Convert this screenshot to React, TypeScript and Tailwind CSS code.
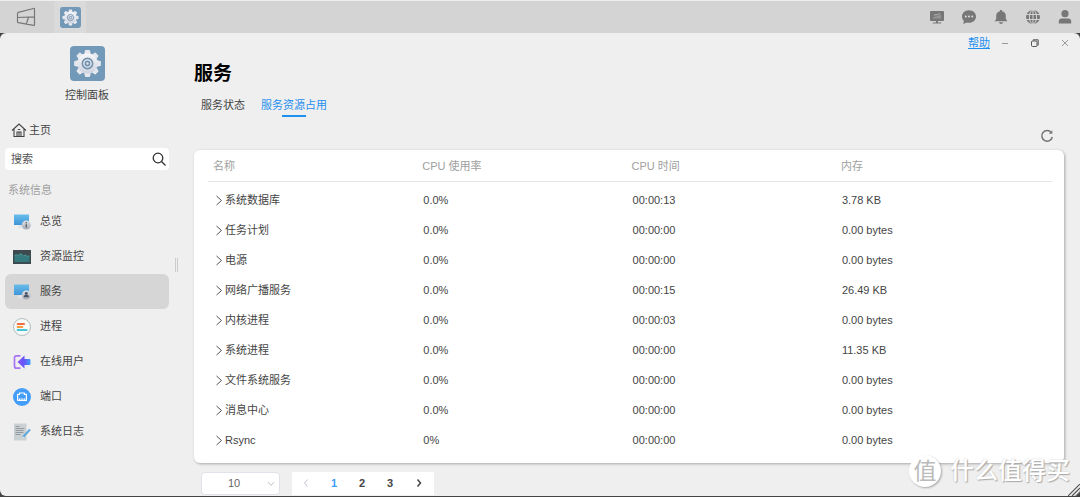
import React, { useState } from "react";

const services = [
  { name: "系统数据库", cpu: "0.0%", time: "00:00:13", memory: "3.78 KB" },
  { name: "任务计划", cpu: "0.0%", time: "00:00:00", memory: "0.00 bytes" },
  { name: "电源", cpu: "0.0%", time: "00:00:00", memory: "0.00 bytes" },
  { name: "网络广播服务", cpu: "0.0%", time: "00:00:15", memory: "26.49 KB" },
  { name: "内核进程", cpu: "0.0%", time: "00:00:03", memory: "0.00 bytes" },
  { name: "系统进程", cpu: "0.0%", time: "00:00:00", memory: "11.35 KB" },
  { name: "文件系统服务", cpu: "0.0%", time: "00:00:00", memory: "0.00 bytes" },
  { name: "消息中心", cpu: "0.0%", time: "00:00:00", memory: "0.00 bytes" },
  { name: "Rsync", cpu: "0%", time: "00:00:00", memory: "0.00 bytes" },
];

const GearIcon = ({ className }: { className: string }) => (
  <svg viewBox="0 0 34 34" className={className} aria-hidden="true">
    <defs>
      <linearGradient id="gear" x1="0" y1="0" x2="0" y2="1">
        <stop offset="0" stopColor="#f7f7fa" />
        <stop offset="1" stopColor="#cfd3df" />
      </linearGradient>
    </defs>
    <rect width="34" height="34" rx="4" fill="#7399b9" />
    <g fill="#e6e8ee">
      {[0, 45, 90, 135, 180, 225, 270, 315].map((angle) => (
        <path
          key={angle}
          d="M13.6 9 L14.5 4.6 Q14.7 4 15.3 4 H18.7 Q19.3 4 19.5 4.6 L20.4 9 Z"
          transform={`rotate(${angle} 17 17)`}
        />
      ))}
    </g>
    <circle cx="17" cy="17" r="9.9" fill="url(#gear)" />
    <circle cx="17" cy="17" r="5" fill="none" stroke="#7191ad" strokeWidth="1.5" />
    <circle cx="17" cy="17" r="2" fill="none" stroke="#7191ad" strokeWidth="1.6" />
  </svg>
);

const MonitorIcon = ({ user }: { user?: boolean }) => (
  <svg viewBox="0 0 18 18" className="size-[18px]" aria-hidden="true">
    <defs>
      <linearGradient id="screen" x1="0" y1="0" x2="0" y2="1">
        <stop offset="0" stopColor="#69bdea" />
        <stop offset="1" stopColor="#3e94d8" />
      </linearGradient>
      <linearGradient id="badge" x1="0" y1="0" x2="0" y2="1">
        <stop offset="0" stopColor="#dfe2e6" />
        <stop offset="1" stopColor="#a5abb4" />
      </linearGradient>
    </defs>
    <path d="M6 12h6l1 3H5z" fill="#e2e4e7" />
    <rect x="1" y="1.5" width="15" height="10.5" fill="url(#screen)" />
    <circle cx="13.3" cy="12" r="4.6" fill="url(#badge)" />
    {user ? (
      <g fill="#4b5468">
        <circle cx="13.3" cy="10.3" r="1.4" />
        <path d="M10.7 14.3c0-1.8 1-2.7 2.6-2.7s2.6.9 2.6 2.7z" />
      </g>
    ) : (
      <g fill="#59616d">
        <circle cx="13.3" cy="9.8" r=".8" />
        <path d="M12.6 11.2h1.4v3.4h-1.4z" />
      </g>
    )}
  </svg>
);

const ResourceIcon = () => (
  <svg viewBox="0 0 18 18" className="size-[18px]" aria-hidden="true">
    <rect y="2" width="18" height="14" fill="#3d4b50" />
    <path d="M1.5 7.5l2-.8 2 .9 1.5-2 2 1 1.5 1.2 2-.7 1.6 1.2 2.4-.4V14h-15z" fill="#34797b" />
    <path d="M1.5 7.5l2-.8 2 .9 1.5-2 2 1 1.5 1.2 2-.7 1.6 1.2 2.4-.4" fill="none" stroke="#4fa39f" strokeWidth=".8" />
  </svg>
);

const ProcessIcon = () => (
  <svg viewBox="0 0 18 18" className="size-[18px]" aria-hidden="true">
    <circle cx="9" cy="9" r="8.5" fill="#f7f8f8" stroke="#a9b8bb" strokeWidth=".9" />
    <path d="M4.6 6h6.5" stroke="#f36b45" strokeWidth="1.8" strokeLinecap="round" />
    <path d="M4.6 9h4.8" stroke="#fa9c3c" strokeWidth="1.8" strokeLinecap="round" />
    <path d="M4.6 12h9" stroke="#45c4d6" strokeWidth="1.8" strokeLinecap="round" />
  </svg>
);

const OnlineIcon = () => (
  <svg viewBox="0 0 18 18" className="size-[18px]" aria-hidden="true">
    <defs>
      <linearGradient id="arrow">
        <stop offset="0" stopColor="#8852f6" />
        <stop offset=".55" stopColor="#6558f8" />
        <stop offset="1" stopColor="#3fa0f8" />
      </linearGradient>
    </defs>
    <path d="M7.5 2.8H3.5Q1.5 2.8 1.5 4.8v8.4Q1.5 15.2 3.5 15.2h4" fill="none" stroke="#a774f4" strokeWidth="1.7" />
    <path d="M4.5 9 11.5 2.5V6H16.5q1 0 1 1v4q0 1-1 1H11.5v3.5z" fill="url(#arrow)" />
  </svg>
);

const PortIcon = () => (
  <svg viewBox="0 0 18 18" className="size-[18px]" aria-hidden="true">
    <circle cx="9" cy="9" r="9" fill="#449df8" />
    <path d="M6.6 6.3V5h4.8v1.3h2v6H4.6v-6z" fill="none" stroke="#fff" strokeWidth="1.2" strokeLinejoin="round" />
    <path d="M6.5 12v-1.8m1.7 1.8v-1.8m1.7 1.8v-1.8m1.7 1.8v-1.8" stroke="#fff" strokeWidth=".8" />
  </svg>
);

const LogIcon = () => (
  <svg viewBox="0 0 18 18" className="size-[18px]" aria-hidden="true">
    <path d="M1 .5h12.5v17H1z" fill="#cbd0d3" />
    <path d="M2.5 3.5h4m-4 2h9m-9 2h8m-8 2h8m-8 2h5" stroke="#8b959b" strokeWidth=".9" />
    <path d="M17 6.5 9.8 14.2" stroke="#5ba8da" strokeWidth="2" />
    <path d="M10.2 13.2 8.8 15.4l2.3-1z" fill="#e8eef1" />
  </svg>
);

const menu = [
  { name: "总览", icon: <MonitorIcon /> },
  { name: "资源监控", icon: <ResourceIcon /> },
  { name: "服务", icon: <MonitorIcon user /> },
  { name: "进程", icon: <ProcessIcon /> },
  { name: "在线用户", icon: <OnlineIcon /> },
  { name: "端口", icon: <PortIcon /> },
  { name: "系统日志", icon: <LogIcon /> },
];

const trayIcons = [
  {
    label: "监控",
    icon: (
      <svg viewBox="0 0 16 16" className="size-4" fill="#777">
        <path d="M2 2h12q1 0 1 1v8q0 1-1 1H9v1.4h3.2v1H3.8v-1H7V12H2q-1 0-1-1V3q0-1 1-1z" />
        <path d="M5 9.5V8m2 1.5V7.4m2 2.1V7m2 2.5V6M5 6.5l2-1 1.5.5L11 4.5" stroke="#c4c4c4" strokeWidth=".8" fill="none" />
      </svg>
    ),
  },
  {
    label: "消息",
    icon: (
      <svg viewBox="0 0 16 16" className="size-4" fill="#777">
        <path d="M8 1.2c4 0 7 2.8 7 6.3s-3 6.3-7 6.3c-.8 0-1.5-.1-2.2-.3L2.3 15l.6-3.2C1.7 10.7 1 9.2 1 7.5 1 4 4 1.2 8 1.2z" />
        <g fill="#ddd">
          <circle cx="4.8" cy="7.5" r="1" />
          <circle cx="8" cy="7.5" r="1" />
          <circle cx="11.2" cy="7.5" r="1" />
        </g>
      </svg>
    ),
  },
  {
    label: "通知",
    icon: (
      <svg viewBox="0 0 16 16" className="size-4" fill="#777">
        <path d="M8 1c.8 0 1.2.5 1.2 1.2C11.8 2.8 12.8 4.5 12.8 7v3l1.7 2.3H1.5L3.2 10V7c0-2.5 1-4.2 3.6-4.8C6.8 1.5 7.2 1 8 1zM6 13.3h4c-.2 1-1 1.7-2 1.7s-1.8-.7-2-1.7z" />
      </svg>
    ),
  },
  {
    label: "语言",
    icon: (
      <svg viewBox="0 0 16 16" className="size-4">
        <circle cx="8" cy="8" r="7" fill="#777" />
        <g fill="none" stroke="#d4d4d4" strokeWidth="1">
          <ellipse cx="8" cy="8" rx="3.6" ry="7" />
          <path d="M8 1v14M1 5.5h14M1 10.5h14" />
        </g>
      </svg>
    ),
  },
  {
    label: "用户",
    icon: (
      <svg viewBox="0 0 16 16" className="size-4" fill="#777">
        <circle cx="8" cy="4.7" r="3.6" />
        <path d="M1.8 14.5v-2q0-3 3-3h6.4q3 0 3 3v2z" />
      </svg>
    ),
  },
];

const Chevron = ({ className, d = "M2.5 1l5 4.5-5 4.5" }: { className: string; d?: string }) => (
  <svg viewBox="0 0 10 12" className={className} fill="none" stroke="currentColor" aria-hidden="true">
    <path d={d} />
  </svg>
);

const TopBar = () => (
  <header className="flex h-[33px] shrink-0 items-center justify-between border-t border-[#eee] bg-[#d4d4d4]">
    <div className="flex h-full items-center">
      <button type="button" aria-label="桌面" className="flex w-[54px] justify-center pr-[2px]">
        <svg viewBox="0 0 20 20" className="size-5" fill="none" stroke="#777" strokeWidth="1.2">
          <path d="M1.5 6.7Q1.5 5.8 2.3 5.4L17.5 1.5q1-.2 1 .7v15.300q0 1-1 .8L2.300 15.700q-.8-.2-.8-.8zM1.500 10.500l17-.6M12.500 10.300l-2.200 6.900" />
        </svg>
      </button>
      <button type="button" aria-label="控制面板" className="flex h-full w-8 items-center justify-center bg-[#dadada]">
        <GearIcon className="size-[21px]" />
      </button>
    </div>
    <div className="flex items-center gap-4 pr-[7px]">
      {trayIcons.map((item) => (
        <button type="button" key={item.label} aria-label={item.label}>
          {item.icon}
        </button>
      ))}
    </div>
  </header>
);

const Sidebar = () => {
  const [active, setActive] = useState("服务");

  return (
    <aside className="w-[174px] shrink-0 px-[5px]">
      <div className="flex flex-col items-center pt-[13px]">
        <GearIcon className="size-[35px]" />
        <p className="mt-[6px] leading-4">控制面板</p>
      </div>
      <a href="#home" className="mt-[15px] mb-[6px] flex h-6 items-center gap-[2px] pl-[6px]">
        <svg viewBox="0 0 16 16" className="size-4" fill="none" stroke="#444" strokeWidth="1.1">
          <path d="M1 8.5 8 2l7 6.5M3 7v7.5h10V7" />
          <path d="M6 14.5V10h4v4.5M8 10v4.5M6.8 7.5h2.4" />
        </svg>
        主页
      </a>
      <label className="flex h-[22px] items-center rounded bg-white pr-[3px] pl-[6px]">
        <input
          type="text"
          aria-label="搜索"
          placeholder="搜索"
          className="w-full min-w-0 flex-1 outline-none placeholder:text-[#555]"
        />
        <svg viewBox="0 0 14 14" className="size-[14px]" fill="none" stroke="#333" strokeWidth="1.3">
          <circle cx="6" cy="6" r="4.8" />
          <path d="m9.5 9.5 4 4" />
        </svg>
      </label>
      <h2 className="mt-3 mb-[6px] pl-[3px] leading-4 text-[#a0a0a0]">系统信息</h2>
      <nav>
        {menu.map((item) => (
          <button
            type="button"
            key={item.name}
            onClick={() => setActive(item.name)}
            className={`flex h-[35px] w-full items-center gap-[9px] rounded-md pl-2 ${
              active === item.name ? "bg-[#d6d6d6]" : ""
            }`}
          >
            {item.icon}
            {item.name}
          </button>
        ))}
      </nav>
    </aside>
  );
};

const WindowControls = () => (
  <div className="flex h-5 items-center justify-end">
    <a href="#help" className="text-[#1e90f0] underline">
      帮助
    </a>
    <button type="button" aria-label="最小化" className="flex w-[30px] justify-center">
      <svg viewBox="0 0 10 10" className="size-[10px]" stroke="#999">
        <path d="M2 5.5h6" />
      </svg>
    </button>
    <button type="button" aria-label="还原" className="flex w-[30px] justify-center">
      <svg viewBox="0 0 10 10" className="size-[10px]" fill="none" stroke="#555">
        <rect x="1.5" y="3" width="5.5" height="5.5" rx="1" />
        <path d="M3.2 2.5V1.8h5v5.4H7.5" />
      </svg>
    </button>
    <button type="button" aria-label="关闭" className="flex w-[30px] justify-center">
      <svg viewBox="0 0 10 10" className="size-[10px]" stroke="#999">
        <path d="m2 2 6 6M8 2 2 8" />
      </svg>
    </button>
  </div>
);

const ServiceTable = () => (
  <div className="rounded-md bg-white pr-3 pb-[7px] pl-[14px] shadow-[1px_1px_3px_rgba(0,0,0,0.3)]">
    <table className="w-full table-fixed text-left">
      <thead>
        <tr className="h-[31px] border-b border-[#e6e6e6] text-[#a0a0a0]">
          <th className="w-[24.8%] pt-[2px] pl-[5px] font-normal">名称</th>
          <th className="w-[24.8%] pt-[2px] pl-[5px] font-normal">CPU 使用率</th>
          <th className="w-[24.8%] pt-[2px] pl-[5px] font-normal">CPU 时间</th>
          <th className="pt-[2px] pl-[5px] font-normal">内存</th>
        </tr>
      </thead>
      <tbody className="before:block before:h-1">
        {services.map((service) => (
          <tr key={service.name} className="h-[30px]">
            <td className="pl-[6px]">
              <button type="button" className="flex items-center gap-px">
                <Chevron className="h-3 w-[10px] text-[#555]" />
                {service.name}
              </button>
            </td>
            <td className="pl-[6px]">{service.cpu}</td>
            <td className="pl-[6px]">{service.time}</td>
            <td className="pl-[6px]">{service.memory}</td>
          </tr>
        ))}
      </tbody>
    </table>
  </div>
);

const Pagination = () => {
  const [page, setPage] = useState(1);

  return (
    <div className="mt-[9px] flex items-center gap-3 pl-[7px]">
      <div className="relative">
        <select
          aria-label="每页条数"
          className="h-[23px] w-[79px] appearance-none rounded-sm border border-[#dfe2e8] bg-white pl-[26px] text-[#666]"
        >
          <option>10</option>
          <option>20</option>
          <option>50</option>
        </select>
        <Chevron
          className="pointer-events-none absolute top-[6px] right-1 h-3 w-[10px] text-[#c0c4cc]"
          d="M2 4l3 3.5L8 4"
        />
      </div>
      <div className="flex h-[23px] items-center bg-white font-bold">
        <button type="button" aria-label="上一页" className="flex w-7 justify-center">
          <Chevron className="h-3 w-[10px] text-[#c0c4cc]" d="M6.5 2.5 3.5 6l3 3.5" />
        </button>
        {[1, 2, 3].map((n) => (
          <button
            type="button"
            key={n}
            onClick={() => setPage(n)}
            className={`w-7 ${page === n ? "text-[#409eff]" : "text-[#444]"}`}
          >
            {n}
          </button>
        ))}
        <button type="button" aria-label="下一页" className="flex w-[30px] justify-center">
          <Chevron className="h-3 w-[10px] stroke-[1.5] text-[#444]" d="M3.5 2.5l3 3.5-3 3.5" />
        </button>
      </div>
    </div>
  );
};

const Watermark = () => (
  <div className="pointer-events-none absolute right-[10px] bottom-[9px] flex items-center gap-[9px]">
    <span className="flex size-8 items-center justify-center rounded-full bg-white text-[23px] leading-none text-[#bbb] shadow-[1px_1px_2px_rgba(0,0,0,0.3)]">
      值
    </span>
    <span className="text-[24px] leading-8 font-medium text-white [text-shadow:1px_1px_1px_#aaa,0_0_2px_#ccc]">
      什么值得买
    </span>
  </div>
);

const App = () => {
  const [tab, setTab] = useState("服务资源占用");

  return (
    <div className="flex min-h-screen flex-col bg-[#444] font-['Liberation_Sans','Noto_Sans_CJK_SC',sans-serif] text-[11px] text-[#444]">
      <TopBar />
      <div className="relative mb-px flex flex-1 overflow-hidden rounded-md bg-[#efefef]">
        <Sidebar />
        <div className="flex w-1 shrink-0 items-center justify-center">
          <span className="h-[14px] w-[3px] border-x border-[#ccc]" />
        </div>
        <main className="min-w-0 flex-1 pl-[15px]">
          <WindowControls />
          <div className="pr-4 pl-px">
            <h1 className="mt-[7px] text-[19px] leading-7 font-bold text-black">服务</h1>
            <div className="mt-[7px] flex gap-4 pl-[7px]">
              {["服务状态", "服务资源占用"].map((name) => (
                <button
                  type="button"
                  key={name}
                  onClick={() => setTab(name)}
                  className={`flex flex-col items-center leading-5 ${tab === name ? "text-[#1e90f0]" : ""}`}
                >
                  {name}
                  {tab === name && <span className="h-[2px] w-6 bg-[#1e90f0]" />}
                </button>
              ))}
            </div>
            <div className="mt-3 mb-[7px] flex justify-end pr-[10px]">
              <button type="button" aria-label="刷新">
                <svg viewBox="0 0 14 14" className="size-[14px]" fill="none" stroke="#777" strokeWidth="1.5">
                  <path d="M11.3 3.6A5.3 5.3 0 1 0 12.3 8" />
                  <path d="M12.3 1.2v3.6H8.8z" fill="#777" stroke="none" />
                </svg>
              </button>
            </div>
            <ServiceTable />
            <Pagination />
          </div>
        </main>
        <svg viewBox="0 0 12 12" className="absolute right-0 bottom-0 size-3" stroke="#555" strokeWidth="1.2" aria-hidden="true">
          <path d="M0 12 12 0M4 12l8-8M8 12l4-4" />
        </svg>
        <Watermark />
      </div>
    </div>
  );
};
export default App;
